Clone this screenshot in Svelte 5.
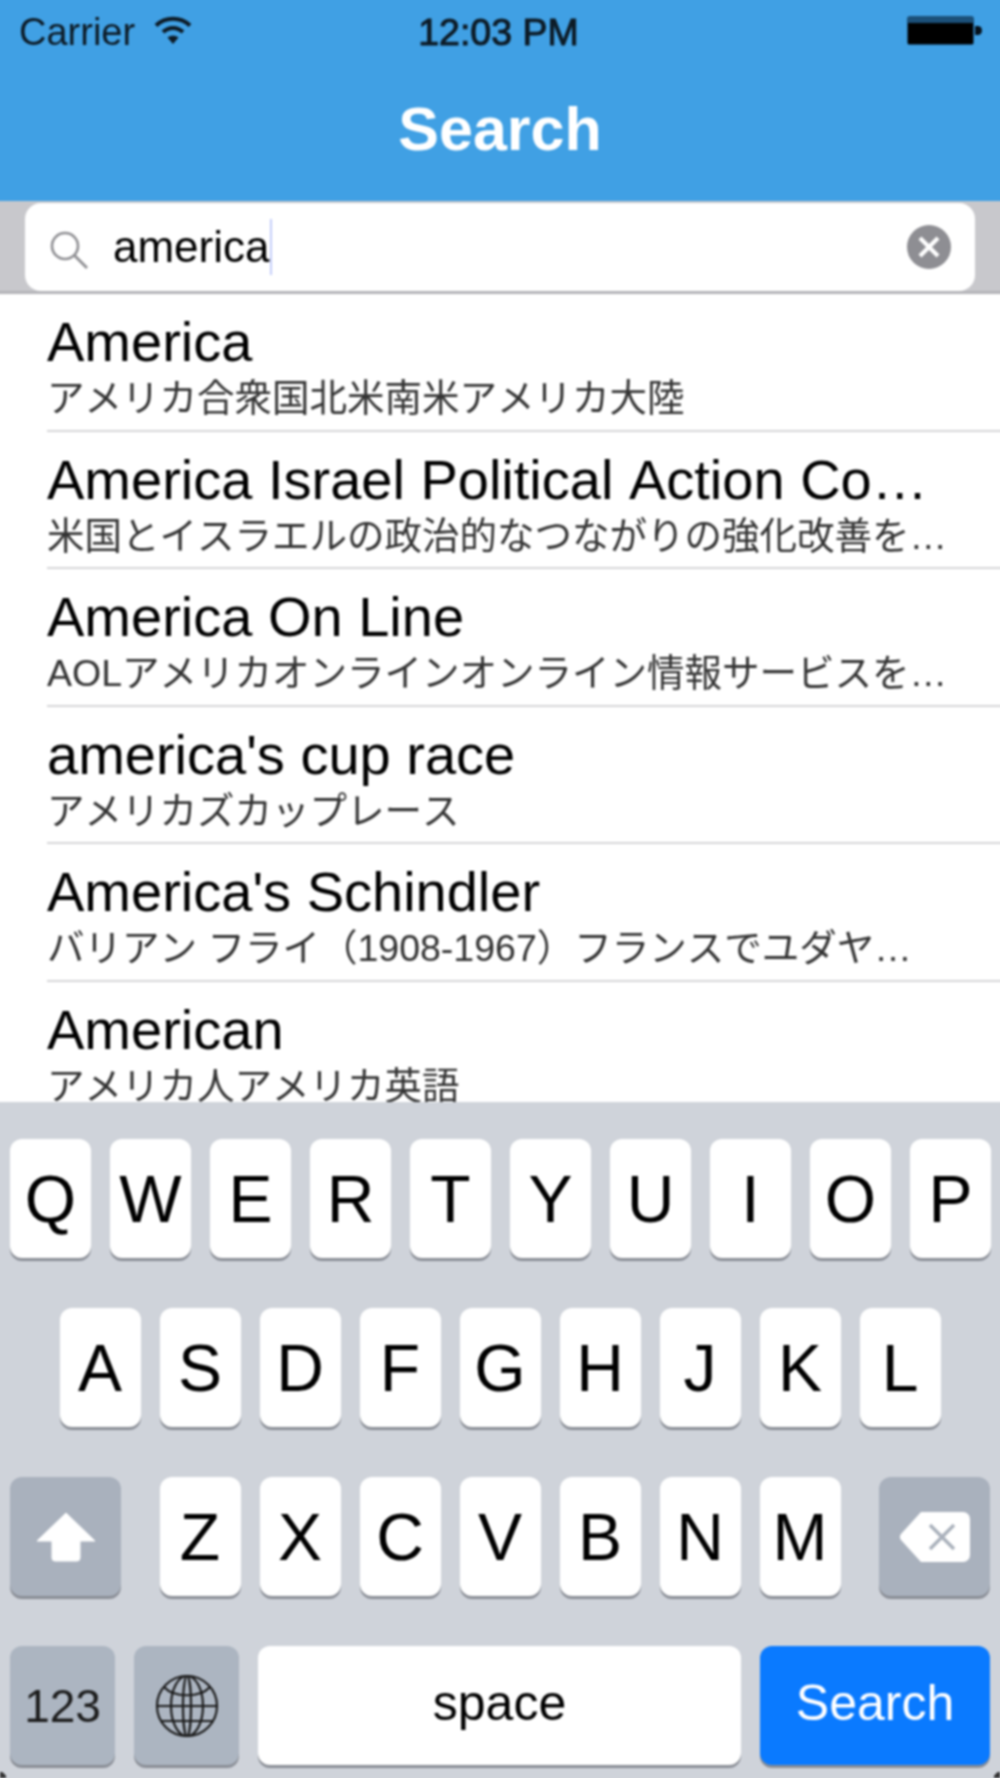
<script lang="ts">
const results = [
  { title: "America", sub: "アメリカ合衆国北米南米アメリカ大陸" },
  { title: "America Israel Political Action Co…", sub: "米国とイスラエルの政治的なつながりの強化改善を…" },
  { title: "America On Line", sub: "AOLアメリカオンラインオンライン情報サービスを…" },
  { title: "america's cup race", sub: "アメリカズカップレース" },
  { title: "America's Schindler", sub: "バリアン フライ（1908-1967）フランスでユダヤ…" },
  { title: "American", sub: "アメリカ人アメリカ英語" },
];
const row1 = ["Q", "W", "E", "R", "T", "Y", "U", "I", "O", "P"];
const row2 = ["A", "S", "D", "F", "G", "H", "J", "K", "L"];
const row3 = ["Z", "X", "C", "V", "B", "N", "M"];
</script>

<div class="phone">
  <div class="screen">
    <header class="top">
      <div class="status">
        <div class="status-left">
          <span>Carrier</span>
          <svg class="wifi" width="38" height="30" viewBox="0 0 38 30">
            <path d="M2 10.500C11.500 1.500 26.500 1.500 36 10.500" fill="none" stroke="#0d1b26" stroke-width="4" />
            <path d="M9 17C14.800 11.500 23.200 11.500 29 17" fill="none" stroke="#0d1b26" stroke-width="4" />
            <path d="M19 29L13.500 22.500C16.500 20 21.500 20 24.500 22.500Z" fill="#0d1b26" />
          </svg>
        </div>
        <span class="time">12:03 PM</span>
        <svg class="battery" width="78" height="30" viewBox="0 0 78 30">
          <rect x="0" y="0" width="67" height="29" rx="3" fill="#1b5079" />
          <rect x="1" y="7" width="65" height="21" fill="#000" />
          <path d="M68 10h3a4 4.500 0 0 1 0 9h-3z" fill="#06121c" />
        </svg>
      </div>
      <h1>Search</h1>
    </header>

    <div class="search-band">
      <div class="field">
        <svg class="glass" width="40" height="40" viewBox="0 0 40 40">
          <circle cx="16" cy="16" r="13" fill="none" stroke="#8f8f93" stroke-width="2.600" />
          <path d="M25.500 25.500L38 38" stroke="#8f8f93" stroke-width="2.800" />
        </svg>
        <span class="query">america</span><span class="caret"></span>
        <svg class="clear" width="44" height="44" viewBox="0 0 44 44">
          <circle cx="22" cy="22" r="22" fill="#8e8e93" />
          <path d="M13 13L31 31M31 13L13 31" stroke="#fff" stroke-width="4.200" />
        </svg>
      </div>
    </div>

    <ul class="results">
      {#each results as r}
        <li>
          <div class="title">{r.title}</div>
          <div class="sub">{r.sub}</div>
        </li>
      {/each}
    </ul>

    <div class="keyboard">
      <div class="keys-row">
        {#each row1 as k}<div class="key">{k}</div>{/each}
      </div>
      <div class="keys-row center">
        {#each row2 as k}<div class="key">{k}</div>{/each}
      </div>
      <div class="keys-row spread">
        <div class="key dark wide">
          <svg width="60" height="50" viewBox="0 0 60 50">
            <path d="M30 1L59 29H44V46a3 3 0 0 1 -3 3H19a3 3 0 0 1 -3 -3V29H1Z" fill="#fff" stroke="#fff" stroke-linejoin="round" />
          </svg>
        </div>
        <div class="letters">
          {#each row3 as k}<div class="key">{k}</div>{/each}
        </div>
        <div class="key dark wide">
          <svg width="72" height="52" viewBox="0 0 72 52">
            <path d="M22 1H64a7 7 0 0 1 7 7V44a7 7 0 0 1 -7 7H22L2 29a5 5 0 0 1 0 -6Z" fill="#fff" />
            <path d="M31 14L55 38M55 14L31 38" stroke="#a9b0bb" stroke-width="3.400" />
          </svg>
        </div>
      </div>
      <div class="keys-row bottom">
        <div class="key dark small num">123</div>
        <div class="key dark small">
          <svg width="64" height="64" viewBox="0 0 64 64" fill="none" stroke="#1c1c1c" stroke-width="2.200">
            <circle cx="32" cy="32" r="30" />
            <ellipse cx="32" cy="32" rx="16" ry="30" />
            <ellipse cx="32" cy="32" rx="4" ry="30" />
            <path d="M2 32H62M6 47H58M9 13C19 24 45 24 55 13" />
          </svg>
        </div>
        <div class="key space">space</div>
        <div class="key go">Search</div>
      </div>
      <span class="corner left"></span>
      <span class="corner right"></span>
    </div>
  </div>
</div>

<style>
:global(body) {
  margin: 0;
  background: #fff;
}

/* the screen is 4px bigger on each side so the blur doesn't fade at the edges */
.phone {
  width: 1000px;
  height: 1778px;
  overflow: hidden;
}

.screen {
  width: 1008px;
  height: 1786px;
  margin: -4px;
  display: flex;
  flex-direction: column;
  font-family: "Liberation Sans", "Noto Sans CJK JP", sans-serif;
  font-kerning: none;
  color: #000;
  filter: blur(0.8px);
}

.top {
  height: 205px;
  flex: none;
  box-sizing: border-box;
  padding-top: 4px;
  background: #40a0e4;
}

.status {
  height: 64px;
  padding: 0 17px 0 23px;
  display: grid;
  grid-template-columns: 1fr auto 1fr;
  align-items: center;
  font-size: 38px;
  color: #0d1b26;
}

.status-left {
  display: flex;
  align-items: center;
  gap: 19px;
}

.time {
  margin-right: 9px;
  font-size: 37.500px;
  -webkit-text-stroke: 1px #0d1b26;
}

.battery {
  justify-self: end;
  margin-top: -3px;
  margin-right: 2px;
}

.wifi {
  margin-top: -4px;
}

h1 {
  margin: 0;
  padding-top: 30px;
  text-align: center;
  font-size: 61px;
  line-height: 70px;
  font-weight: bold;
  color: #fff;
}

.search-band {
  height: 93px;
  flex: none;
  box-sizing: border-box;
  padding: 2px 29px 0;
  background: #c8c8cc;
  border-bottom: 3px solid #b4b4b8;
}

.field {
  height: 88px;
  padding: 0 24px;
  display: flex;
  align-items: center;
  background: #fff;
  border-radius: 16px;
}

.glass {
  margin-right: 24px;
  margin-top: 6px;
}

.query {
  font-size: 44px;
}

.caret {
  width: 2px;
  height: 56px;
  background: #c3cdfa;
}

.clear {
  margin-left: auto;
}

.results {
  flex: 1;
  margin: 0;
  padding: 0;
  list-style: none;
  overflow: hidden;
  background: #fff;
}

.results li {
  height: 137.500px;
  box-sizing: border-box;
  margin-left: 51px;
  padding-top: 15px;
  border-bottom: 2px solid #d6d6d8;
}

.title {
  font-size: 56px;
  line-height: 66px;
  white-space: nowrap;
}

.sub {
  font-size: 37.500px;
  line-height: 46px;
  color: #333;
  white-space: nowrap;
}

.keyboard {
  position: relative;
  height: 680px;
  flex: none;
  box-sizing: border-box;
  padding-top: 37px;
  display: flex;
  flex-direction: column;
  gap: 50px;
  background: #cfd3da;
}

.keys-row {
  display: flex;
  gap: 19px;
  padding: 0 14px;
}

.center {
  justify-content: center;
}

.spread {
  justify-content: space-between;
}

.letters {
  display: flex;
  gap: 19px;
}

.key {
  width: 81px;
  height: 119px;
  flex: none;
  display: flex;
  align-items: center;
  justify-content: center;
  background: #fff;
  border-radius: 12px;
  box-shadow: 0 3px 0 #8a8e96;
  font-size: 66px;
}

.dark {
  background: #a9b1bd;
}

.wide {
  width: 111px;
}

.small {
  width: 105px;
  background: #acb5c1;
}

.num {
  font-size: 46px;
  color: #1c1c1c;
}

.space {
  flex: 1;
  box-sizing: border-box;
  padding-bottom: 6px;
  font-size: 50px;
}

.go {
  width: 230px;
  box-sizing: border-box;
  padding-bottom: 6px;
  background: #0a7aff;
  color: #fff;
  font-size: 50px;
}

.corner {
  position: absolute;
  bottom: 4px;
  width: 6px;
  height: 6px;
}

.left {
  left: 4px;
  background: radial-gradient(circle at 0 100%, #333 70%, transparent 75%);
}

.right {
  right: 4px;
  background: radial-gradient(circle at 100% 100%, #333 70%, transparent 75%);
}
</style>
